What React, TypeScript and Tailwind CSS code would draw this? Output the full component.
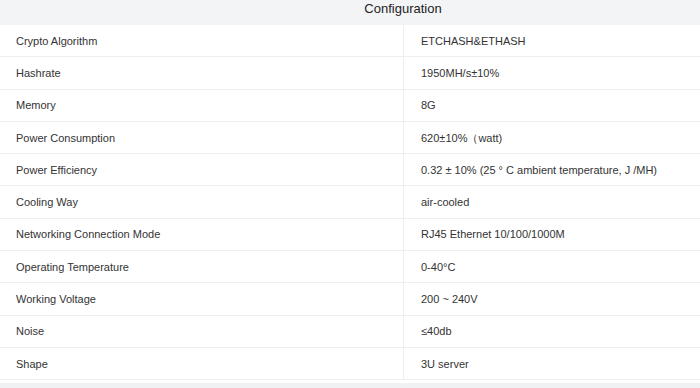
const specs: [string, string][] = [
  ["Crypto Algorithm", "ETCHASH&ETHASH"],
  ["Hashrate", "1950MH/s±10%"],
  ["Memory", "8G"],
  ["Power Consumption", "620±10%（watt)"],
  ["Power Efficiency", "0.32 ± 10% (25 ° C ambient temperature, J /MH)"],
  ["Cooling Way", "air-cooled"],
  ["Networking Connection Mode", "RJ45 Ethernet 10/100/1000M"],
  ["Operating Temperature", "0-40°C"],
  ["Working Voltage", "200 ~ 240V"],
  ["Noise", "≤40db"],
  ["Shape", "3U server"],
];

export default function App() {
  return (
    <div className="h-[388px] w-[700px] overflow-hidden bg-white font-['Liberation_Sans',Arial,sans-serif] text-[#333]">
      <div className="flex h-[25px] items-start bg-[#f3f4f6] pl-[106px] pt-[1px]">
        <span className="w-full text-center text-[13px] font-medium leading-[16px] text-[#222]">
          Configuration
        </span>
      </div>
      {specs.map(([label, value]) => (
        <div
          key={label}
          className="grid h-[32.3px] grid-cols-[403px_1fr] border-b border-[#efefef] text-[11px] leading-none"
        >
          <div className="flex items-center pl-4 pt-[1px]">{label}</div>
          <div className="flex items-center border-l border-[#efefef] pl-[17px] pt-[1px]">{value}</div>
        </div>
      ))}
      <div className="mt-[3px] h-[6px] bg-[#f0f1f3]" />
    </div>
  );
}
